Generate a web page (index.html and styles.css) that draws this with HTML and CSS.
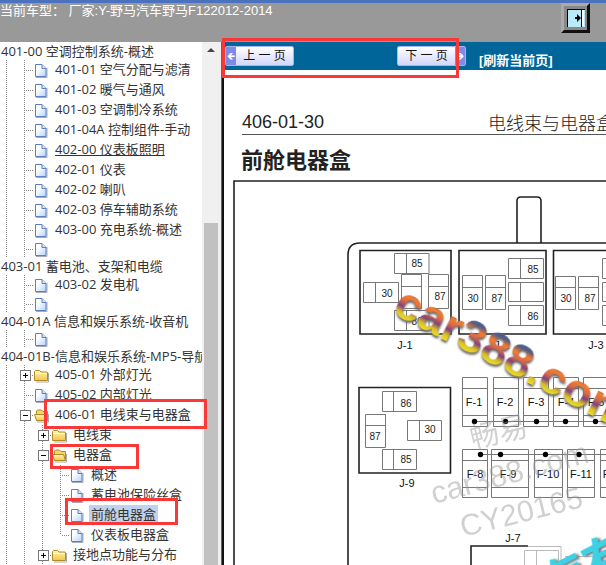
FILE: index.html
```
<!DOCTYPE html>
<html lang="zh-CN">
<head>
<meta charset="utf-8">
<title>电线束与电器盒</title>
<link rel="stylesheet" href="styles.css">
</head>
<body>
<svg class="defs" aria-hidden="true">
  <defs>
    <linearGradient id="paper" x1="0" y1="0" x2="1" y2="1"><stop offset="0.3" stop-color="#fff"/><stop offset="1" stop-color="#b4d4fb"/></linearGradient>
    <linearGradient id="gold" x1="0" y1="0" x2="0" y2="1"><stop offset="0" stop-color="#fff8b8"/><stop offset="1" stop-color="#f0c548"/></linearGradient>
    <symbol id="page" viewBox="0 0 15 15"><path d="M2 14.500h11V5" fill="none" stroke="#aab" stroke-width="1"/><path d="M1.500 1.500h6.500l4 4v8h-10.500z" fill="url(#paper)" stroke="#5b7fc0"/><path d="M8 1.500v4h4" fill="#d5e4fa" stroke="#5b7fc0"/></symbol>
    <symbol id="folder" viewBox="0 0 15 15"><path d="M2 14h12.500V5" fill="none" stroke="#aaa"/><path d="M.5 12.500v-9l1-1h4l1.500 1.500h6l.5 1v7.500z" fill="url(#gold)" stroke="#b08a28"/><path d="M1 5.500h12" stroke="#fff9d0"/></symbol>
    <symbol id="open" viewBox="0 0 15 15"><path d="M3 14h11.500V6" fill="none" stroke="#aaa"/><path d="M2.500 12.500V3l1-1h4l1.500 1.500h4.500v9z" fill="#f3d56b" stroke="#b08a28"/><path d="M.5 6.500h11l2 6h-11z" fill="url(#gold)" stroke="#b08a28"/></symbol>
  </defs>
</svg>
<header class="top">
  <p>当前车型： 厂家:Y-野马汽车野马F122012-2014</p>
  <button class="toggle" aria-label="展开"><svg width="18" height="18" viewBox="0 0 18 18"><path d="M0 0h18v18H0z" fill="#b8eafa"/><path d="M14.500 0v18M0 .5h18M.5 0v18" stroke="#000"/><path d="M15 1h2v16h-2z" fill="#fff"/><path d="M8 8h2V5l4 4-4 4v-3H8z" fill="#000"/></svg></button>
</header>
<div class="frames">
  <nav class="tree">
    <div class="list">
      <h2>401-00 空调控制系统-概述</h2>
      <div class="row"><i class="guide"></i><i class="branch"></i><svg><use href="#page"/></svg><a href="#">401-01 空气分配与滤清</a></div>
      <div class="row"><i class="guide"></i><i class="branch"></i><svg><use href="#page"/></svg><a href="#">401-02 暖气与通风</a></div>
      <div class="row"><i class="guide"></i><i class="branch"></i><svg><use href="#page"/></svg><a href="#">401-03 空调制冷系统</a></div>
      <div class="row"><i class="guide"></i><i class="branch"></i><svg><use href="#page"/></svg><a href="#">401-04A 控制组件-手动</a></div>
      <div class="row"><i class="guide"></i><i class="branch"></i><svg><use href="#page"/></svg><a href="#" class="hover">402-00 仪表板照明</a></div>
      <div class="row"><i class="guide"></i><i class="branch"></i><svg><use href="#page"/></svg><a href="#">402-01 仪表</a></div>
      <div class="row"><i class="guide"></i><i class="branch"></i><svg><use href="#page"/></svg><a href="#">402-02 喇叭</a></div>
      <div class="row"><i class="guide"></i><i class="branch"></i><svg><use href="#page"/></svg><a href="#">402-03 停车辅助系统</a></div>
      <div class="row"><i class="guide"></i><i class="branch"></i><svg><use href="#page"/></svg><a href="#">403-00 充电系统-概述</a></div>
      <div class="row blank"><i class="guide"></i><i class="branch"></i><svg><use href="#page"/></svg></div>
      <h2>403-01 蓄电池、支架和电缆</h2>
      <div class="row"><i class="guide"></i><i class="branch"></i><svg><use href="#page"/></svg><a href="#">403-02 发电机</a></div>
      <div class="row blank"><i class="guide"></i><i class="branch"></i><svg><use href="#page"/></svg></div>
      <h2>404-01A 信息和娱乐系统-收音机</h2>
      <div class="row blank"><i class="guide"></i><i class="branch"></i><svg><use href="#page"/></svg></div>
      <h2>404-01B-信息和娱乐系统-MP5-导航</h2>
      <div class="row"><i class="guide"></i><i class="branch plus"></i><svg><use href="#folder"/></svg><a href="#">405-01 外部灯光</a></div>
      <div class="row"><i class="guide"></i><i class="branch"></i><svg><use href="#page"/></svg><a href="#">405-02 内部灯光</a></div>
      <div class="row"><i class="guide"></i><i class="branch minus"></i><svg><use href="#open"/></svg><a href="#">406-01 电线束与电器盒</a><b class="mark mark-group"></b></div>
      <div class="row"><i class="guide"></i><i class="guide"></i><i class="branch plus"></i><svg><use href="#folder"/></svg><a href="#">电线束</a></div>
      <div class="row"><i class="guide"></i><i class="guide"></i><i class="branch minus"></i><svg><use href="#open"/></svg><a href="#">电器盒</a><b class="mark mark-box"></b></div>
      <div class="row"><i class="guide"></i><i class="guide"></i><i class="guide"></i><i class="branch"></i><svg><use href="#page"/></svg><a href="#">概述</a></div>
      <div class="row"><i class="guide"></i><i class="guide"></i><i class="guide"></i><i class="branch"></i><svg><use href="#page"/></svg><a href="#">蓄电池保险丝盒</a></div>
      <div class="row"><i class="guide"></i><i class="guide"></i><i class="guide"></i><i class="branch"></i><svg><use href="#page"/></svg><a href="#" class="selected">前舱电器盒</a><b class="mark mark-item"></b></div>
      <div class="row"><i class="guide"></i><i class="guide"></i><i class="guide"></i><i class="branch last"></i><svg><use href="#page"/></svg><a href="#">仪表板电器盒</a></div>
      <div class="row"><i class="guide"></i><i class="guide"></i><i class="branch plus"></i><svg><use href="#folder"/></svg><a href="#">接地点功能与分布</a></div>
    </div>
    <div class="scroll"><i class="arrow"></i><i class="thumb"></i></div>
  </nav>
  <main>
    <div class="bar">
      <button class="nav prev"><i>🡸</i><span>上 一 页</span></button>
      <button class="nav next"><span>下 一 页</span><i>🡺</i></button>
      <a href="#">[刷新当前页]</a>
      <b class="mark mark-bar"></b>
    </div>
    <article>
      <div class="running"><span class="code">406-01-30</span><span class="chapter">电线束与电器盒</span></div>
      <h1>前舱电器盒</h1>
      <svg class="diagram" width="560" height="440" viewBox="233 180 560 440">
        <defs>
          <linearGradient id="rainbow" gradientUnits="userSpaceOnUse" x1="0" y1="-33" x2="0" y2="1">
            <stop offset="0" stop-color="#3d5f9c"/><stop offset=".14" stop-color="#5a5c80"/><stop offset=".3" stop-color="#f57c2c"/><stop offset=".48" stop-color="#d56a48"/><stop offset=".64" stop-color="#80407e"/><stop offset=".8" stop-color="#d8bd28"/><stop offset="1" stop-color="#f4e624"/>
          </linearGradient>
        </defs>
        <g class="frame">
          <path d="M234 620V181H793"/>
          <path d="M348 620V255q0-12 12-12H793M517 243V201q0-4 4-4h16q4 0 4 4v42"/>
          <path d="M360 250.500h91V334h-91zM459 250.500h87V334h-87zM553.500 250.500h92V334h-92zM359 387.500h91.500V473H359z"/>
          <path d="M471 620V546h57"/>
        </g>
        <g class="cell">
          <path d="M394.500 253.500h34.500v20h-34.500zM406.500 253.500v20M363.500 282.500h35v20h-35zM375.500 282.500v20M401.500 274.500h20v34h-20zM401.500 286.500h20M428.500 274.500h20v34h-20zM428.500 286.500h20M394.500 310.500h34.500v20h-34.500zM406.500 310.500v20"/>
          <path d="M462.500 275.500h20v34h-20zM462.500 287.500h20M485.500 275.500h20v34h-20zM485.500 287.500h20M508.500 258.500h35v20h-35zM520.500 258.500v20M508.500 282.500h35v19h-35zM520.500 282.500v19M508.500 305.500h35v20h-35zM520.500 305.500v20"/>
          <path d="M555.500 276.500h20v33h-20zM555.500 287.500h20M578.500 276.500h20v33h-20zM578.500 287.500h20M602.500 258.500h35v20h-35zM602.500 282.500h35v19h-35zM602.500 305.500h35v20h-35z"/>
          <path d="M382.500 391.500h34v20h-34zM393.500 391.500v20M365.500 414.500h20v33h-20zM365.500 425.500h20M407.500 420.500h34v20h-34zM419.500 420.500v20M382.500 449.500h34v20h-34zM393.500 449.500v20"/>
          <path d="M462.500 377.500h25v49h-25zM462.500 388.500h25M462.500 415.500h25M493.500 377.500h25v49h-25zM493.500 388.500h25M493.500 415.500h25M523.500 377.500h25v49h-25zM523.500 388.500h25M523.500 415.500h25M553.500 377.500h25v49h-25zM553.500 388.500h25M553.500 415.500h25M583.500 377.500h25v49h-25zM583.500 388.500h25M583.500 415.500h25M474 421.500h140"/>
          <path d="M462.500 449.500h25v48h-25zM462.500 460.500h25M462.500 487.500h25M491.500 449.500h37v48h-37zM491.500 460.500h37M491.500 487.500h37M534.500 449.500h28v48h-28zM534.500 460.500h28M534.500 487.500h28M567.500 449.500h27v48h-27zM567.500 460.500h27M567.500 487.500h27M600.500 449.500h27v48h-27zM600.500 460.500h27M600.500 487.500h27M480 454.500h140"/>
          <path class="faint" d="M528 546.500h33v50M524.500 596v-45.500h34v45M536.500 550v45M565 556.500h41"/>
        </g>
        <g class="dot"><circle cx="474.500" cy="421.500" r="2.700"/><circle cx="505.500" cy="421.500" r="2.700"/><circle cx="536.500" cy="421.500" r="2.700"/><circle cx="565.500" cy="421.500" r="2.700"/><circle cx="595.500" cy="421.500" r="2.700"/><circle cx="480.500" cy="454.500" r="2.700"/><circle cx="500.500" cy="454.500" r="2.700"/><circle cx="545.500" cy="454.500" r="2.700"/><circle cx="579" cy="454.500" r="2.700"/></g>
        <g class="num">
          <text x="417" y="267">85</text><text x="387" y="297">30</text><text x="440" y="300">87</text><text x="417" y="325">86</text>
          <text x="473" y="302">30</text><text x="497" y="302">87</text><text x="533" y="273">85</text><text x="533" y="320">86</text>
          <text x="566" y="302">30</text><text x="590" y="302">87</text>
          <text x="406" y="407">86</text><text x="375" y="440">87</text><text x="430" y="433">30</text><text x="406" y="463">85</text>
        </g>
        <g class="label">
          <text x="405" y="349">J-1</text><text x="502" y="349">J-2</text><text x="596" y="349">J-3</text><text x="407" y="487">J-9</text><text x="513" y="542">J-7</text>
          <text x="474" y="406">F-1</text><text x="505" y="406">F-2</text><text x="536" y="406">F-3</text><text x="566" y="406">F-4</text><text x="596" y="406">F-5</text>
          <text x="475" y="478">F-8</text><text x="508" y="478">F-9</text><text x="548" y="478">F-10</text><text x="581" y="478">F-11</text><text x="614" y="478">F-12</text>
        </g>
        <g class="stamp">
          <text transform="translate(473 449) rotate(-14)" font-size="29">畅易</text>
          <text transform="translate(434 504) rotate(-15)" font-size="31">car388.com</text>
          <text transform="translate(463 537) rotate(-14)" font-size="30">CY20165</text>
        </g>
        <text class="logo" transform="translate(391 313) rotate(27)">car388.com</text>
        <text class="sea" transform="translate(550 608) rotate(-27)">海有</text>
      </svg>
    </article>
  </main>
</div>
</body>
</html>
```
FILE: styles.css
```
* { box-sizing: border-box; }
body {
  margin: 0;
  height: 100vh;
  display: flex;
  flex-direction: column;
  overflow: hidden;
  background: #fff;
  font: 13px/20px "Open Sans", "Noto Sans CJK SC", sans-serif;
  color: #333;
}
p, h1, h2 { margin: 0; font-weight: normal; }
a { color: inherit; text-decoration: none; }
.defs { position: absolute; width: 0; height: 0; }

.top {
  flex: none;
  display: flex;
  justify-content: space-between;
  height: 42px;
  padding-right: 16px;
  background: #999;
  border-top: 3px solid #4a72bf;
  color: #fff;
  font: 13px/16px "Liberation Sans", "Noto Sans CJK SC", sans-serif;
}
.toggle {
  width: 29px;
  height: 30px;
  padding: 0;
  display: grid;
  place-items: center;
  background: #888;
  border: 3px solid;
  border-color: #aaa #111 #111 #aaa;
}

.frames { flex: 1; min-height: 0; display: flex; }
.tree {
  flex: none;
  display: flex;
  width: 224px;
  border-right: 2px solid #111;
  box-shadow: inset -1px 0 #666;
}
.list {
  flex: 1;
  min-width: 0;
  clip-path: inset(0 -6px 0 0);
  white-space: nowrap;
  padding-top: 1px;
}
.list h2 { overflow: hidden; font-size: 13px; line-height: 17px; padding-left: 1px; }
.row { position: relative; display: flex; align-items: center; height: 20px; }
.row.blank { height: 18px; }
.row > svg { flex: none; width: 15px; height: 15px; margin-right: 4px; }
.row a { line-height: 18px; padding: 0 2px; margin-bottom: 2px; }
.row a.hover { text-decoration: underline; }
.row a.selected { background: #c1d2ee; }
.guide, .branch {
  flex: none;
  position: relative;
  align-self: stretch;
  width: 18px;
  background: repeating-linear-gradient(#888 0 1px, transparent 1px 2px) 6px 0 / 1px 100% no-repeat;
}
.branch {
  width: 16px;
  background:
    repeating-linear-gradient(#888 0 1px, transparent 1px 2px) 6px 0 / 1px 100% no-repeat,
    repeating-linear-gradient(90deg, #888 0 1px, transparent 1px 2px) 8px 50% / 8px 1px no-repeat;
}
.branch.last { background-size: 1px 50%, 8px 1px; }
.plus::before, .minus::before {
  content: "";
  position: absolute;
  left: 2px;
  top: 5px;
  width: 9px;
  height: 9px;
  border: 1px solid #777;
  background: linear-gradient(#000, #000) center / 5px 1px no-repeat, #fff;
}
.plus::before {
  background:
    linear-gradient(#000, #000) center / 5px 1px no-repeat,
    linear-gradient(#000, #000) center / 1px 5px no-repeat, #fff;
}
.scroll {
  flex: none;
  display: flex;
  flex-direction: column;
  width: 19px;
  margin-right: 1px;
  padding: 6px 3px 0 2px;
  background: #f0f0f0;
}
.arrow {
  align-self: center;
  border: 4px solid transparent;
  border-top: 0;
  border-bottom-color: #444;
  margin-bottom: 171px;
}
.thumb { flex: 1; background: #c1c1c1; }

.mark { position: absolute; z-index: 2; border: 3px solid #fb3838; pointer-events: none; }
.mark-group { left: 44px; top: -6px; width: 163px; height: 30px; }
.mark-box { left: 50px; top: -1px; width: 89px; height: 25px; }
.mark-item { left: 65px; top: -7px; width: 113px; height: 27px; }
.mark-bar { left: -2px; top: -4px; width: 237px; height: 40px; }

main { flex: 1; min-width: 0; display: flex; flex-direction: column; }
.bar {
  position: relative;
  flex: none;
  display: flex;
  align-items: center;
  height: 28px;
  padding-left: 1px;
  background: #069;
}
.nav {
  display: flex;
  align-items: stretch;
  width: 69px;
  height: 20px;
  padding: 0;
  border: 1px solid #aab4ee;
  border-radius: 2px;
  background: linear-gradient(#fff, #d2d6fa);
  color: #111;
  font: 12px/18px "Liberation Sans", "Noto Sans CJK SC", sans-serif;
}
.nav span { flex: 1; text-align: center; }
.nav i {
  width: 10px;
  background: #7d8be6;
  color: #fff;
  font: normal 10px/18px "DejaVu Sans", sans-serif;
  text-align: center;
}
.prev { margin-right: 103px; }
.bar a { margin: 10px 0 0 13px; color: #fff; font: bold 13px/18px "Liberation Sans", "Noto Sans CJK SC", sans-serif; }

article { flex: 1; min-height: 0; overflow: hidden; padding: 40px 0 0 9px; white-space: nowrap; color: #222; }
.running {
  display: flex;
  gap: 164px;
  margin-left: 9px;
  height: 25px;
  border-bottom: 1px solid #555;
}
.code { font: 18px/24px "Liberation Sans", sans-serif; }
.chapter { font: 300 18px/24px "Noto Sans CJK SC", sans-serif; }
h1 { margin-left: 8px; padding-top: 7px; font: bold 22px/32px "Noto Sans CJK SC", sans-serif; height: 45px; }
.diagram { display: block; font-family: "Liberation Sans", "Noto Sans CJK SC", sans-serif; }
.frame { fill: none; stroke: #222; stroke-width: 1.600; }
.cell { fill: none; stroke: #777; }
.faint { stroke: #bbb; }
.dot { fill: #000; }
.num { font-size: 10px; text-anchor: middle; fill: #222; }
.label { font-size: 11px; text-anchor: middle; fill: #111; }
.stamp { fill: #999; opacity: .45; }
.logo { font-size: 47px; font-weight: bold; fill: url(#rainbow); filter: drop-shadow(1px 2px 1px #666); }
.sea { font-size: 50px; font-weight: bold; fill: #3fd0e4; filter: drop-shadow(2px 2px 1px #777); }
```
